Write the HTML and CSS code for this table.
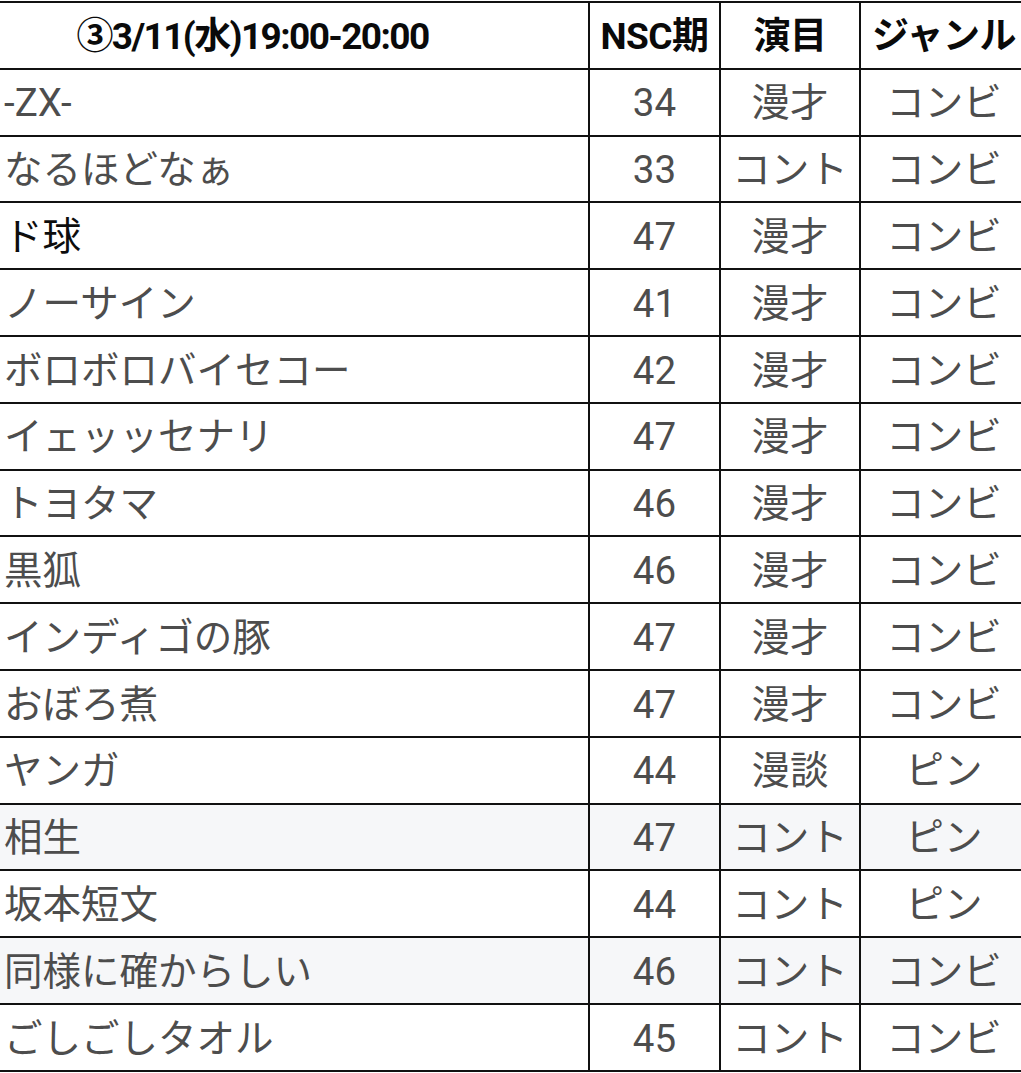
FILE: index.html
```html
<!DOCTYPE html>
<html lang="ja">
<head>
<meta charset="utf-8">
<link rel="stylesheet" href="styles.css">
</head>
<body>
<table class="lineup">
  <colgroup>
    <col class="c-name"><col class="c-nsc"><col class="c-type"><col class="c-genre">
  </colgroup>
  <thead>
    <tr><th class="date">③3/11(水)19:00-20:00</th><th>NSC期</th><th>演目</th><th>ジャンル</th></tr>
  </thead>
  <tbody>
    <tr><td class="name">-ZX-</td><td>34</td><td>漫才</td><td>コンビ</td></tr>
    <tr><td class="name">なるほどなぁ</td><td>33</td><td>コント</td><td>コンビ</td></tr>
    <tr><td class="name dark">ド球</td><td>47</td><td>漫才</td><td>コンビ</td></tr>
    <tr><td class="name">ノーサイン</td><td>41</td><td>漫才</td><td>コンビ</td></tr>
    <tr><td class="name">ボロボロバイセコー</td><td>42</td><td>漫才</td><td>コンビ</td></tr>
    <tr><td class="name">イェッッセナリ</td><td>47</td><td>漫才</td><td>コンビ</td></tr>
    <tr><td class="name">トヨタマ</td><td>46</td><td>漫才</td><td>コンビ</td></tr>
    <tr><td class="name">黒狐</td><td>46</td><td>漫才</td><td>コンビ</td></tr>
    <tr><td class="name">インディゴの豚</td><td>47</td><td>漫才</td><td>コンビ</td></tr>
    <tr><td class="name">おぼろ煮</td><td>47</td><td>漫才</td><td>コンビ</td></tr>
    <tr><td class="name">ヤンガ</td><td>44</td><td>漫談</td><td>ピン</td></tr>
    <tr class="shade"><td class="name">相生</td><td>47</td><td>コント</td><td>ピン</td></tr>
    <tr><td class="name">坂本短文</td><td>44</td><td>コント</td><td>ピン</td></tr>
    <tr class="shade"><td class="name">同様に確からしい</td><td>46</td><td>コント</td><td>コンビ</td></tr>
    <tr><td class="name">ごしごしタオル</td><td>45</td><td>コント</td><td>コンビ</td></tr>
  </tbody>
</table>
</body>
</html>
```

FILE: styles.css
```css
html, body {
  margin: 0;
  padding: 0;
  background: #ffffff;
  overflow: hidden;
}

body {
  font-family: Roboto, "Noto Sans CJK JP", "Noto Sans", sans-serif;
}

.lineup {
  border-collapse: collapse;
  table-layout: fixed;
  width: 1112px;
  margin-left: -85px;
  margin-top: 1px;
}

.c-name { width: 673px; }
.c-nsc { width: 131px; }
.c-type { width: 140px; }
.c-genre { width: 168px; }

.lineup th,
.lineup td {
  border: 2px solid #111111;
  height: 66.8px;
  padding: 0;
  box-sizing: border-box;
  text-align: center;
  vertical-align: middle;
  line-height: 1;
  white-space: nowrap;
  overflow: hidden;
}

.lineup th {
  font-weight: 700;
  font-size: 37px;
  color: #0a0a0a;
  letter-spacing: -0.5px;
  padding-top: 2px;
}

.lineup th.date {
  letter-spacing: -1.6px;
}

.lineup td {
  font-size: 38.5px;
  color: #4d4d4d;
  padding-top: 3px;
}

.lineup td.name {
  text-align: left;
  padding-left: 87px;
}

.lineup td.dark {
  color: #0d0d0d;
}

.lineup tr.shade td {
  background: #f6f7f9;
}
```
